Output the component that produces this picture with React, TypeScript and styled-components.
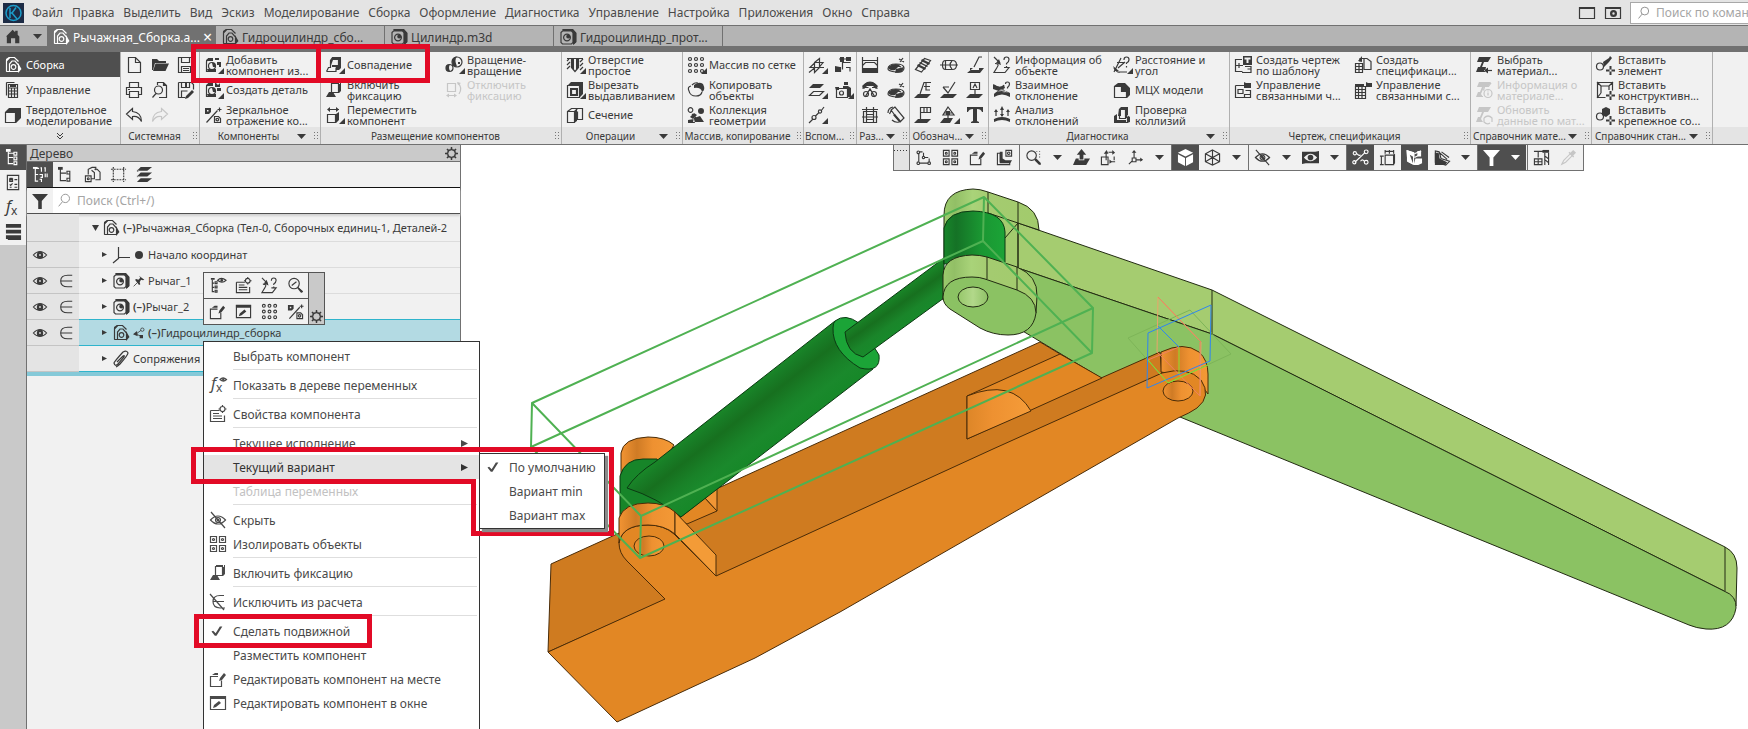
import React from "react";
import styled, { createGlobalStyle, css } from "styled-components";

const ink = "#3a3a3a";
const dark = "#4f4f4f";
const line = "#717171";
const light = "#f1f1f1";
const foot = "#e4e4e4";
const cyan = "#2fb4cc";
const red = "#e20a26";

const GlobalStyle = createGlobalStyle`
  * { box-sizing: border-box; }
  body { margin: 0; background: #fff; color: ${ink}; font: 12px "Noto Sans", "Open Sans", sans-serif; }
  button { border: 0; margin: 0; padding: 0; background: none; color: inherit; font: inherit; text-align: left; white-space: nowrap; }
  input { font: inherit; color: inherit; }
  input::placeholder { color: #a5a5a5; opacity: 1; }
`;

/* ---------- icons, on an 18 x 18 grid ---------- */

const c = (x: number, y: number, r: number) => `M${x - r} ${y}a${r} ${r} 0 1 0 ${2 * r} 0a${r} ${r} 0 1 0 ${-2 * r} 0`;
const q = (x: number, y: number, w: number, h: number) => `M${x} ${y}h${w}v${h}h${-w}z`;
const pencil = "M11 8l4-5 2 2-4 5-3 1z";
const slab = "M4 13h13l-4 4H0z";
const grid9 = [3, 9, 15].flatMap((x) => [3, 9, 15].map((y) => c(x, y, 1.5))).join("");
const four = [1.5, 10.5].flatMap((x) => [1.5, 10.5].map((y) => q(x, y, 6, 6) + c(x + 3, y + 3, 1))).join("");
const eye = "M1.500 9q7.500-8 15 0q-7.500 8-15 0z";

type Glyph = [string, string?];
const glyphs: Record<string, Glyph> = {
  assembly: ["M2.500 15.500V4.500l3-3h5l4 4M5.500 15.500V8l2.500-3h3l3.500 4v6.500zM2.500 15.500h9" + c(9.5, 11, 2.3), "M14 7l3.500 6-3.500 4zM2 3l3-2 1 1-3 3v11l-1-1z"],
  part: ["M2 4.500l1.500-1.500h9l1.500 1.500v10l-1.500 1.500h-9L2 14.500zM3.500 2h10l3 3v9l-2 2" + c(8, 9.5, 3.4), "M3 2l1-1h10l3.500 4v9L14 17V5l-2-3z" + c(9.2, 8.6, 2)],
  home: ["", "M0 9l8-8 3 3V2h3v5l2 2v8h-5v-6H6v6H1V9z"],
  control: ["M4.500 3.500h9v13h-9zM2.500 1.500h8M2.500 1.500v13M4.500 7h9M4.500 10h9M4.500 13h9M7.500 7v9M10.500 7v9", q(6, 4, 6, 2)],
  solid: ["M1.500 6.500h10v10h-10z", "M1 6l4-4h12l-5 4zM12 6l5-4v10l-5 5z"],
  newDoc: ["M3.500 1.500h7l5 5v10h-12zM10.500 1.500v5h5"],
  folder: ["", "M1 3h5l2 2h7v2H4l-2 7H1zM4.500 7.500H18L14.500 15H2z"],
  save: ["M1.500 1.500h13l2 2v13h-15zM4.500 1.500v5h8v-5M4.500 16.500v-6h9v6M6 12.500h6M6 14.500h6"],
  saveAs: ["M1.500 1.500h13l2 2v5M1.500 1.500v15h7M4.500 1.500v5h8v-5M4.500 16v-6h6", "M9 15l6-6 2 2-6 6-3 1zM8 2h2v4H8z"],
  print: ["M4.500 6V1.500h9V6M4.500 13.500h-3v-7h15v7h-3M4.500 10.500h9v6h-9z", q(3, 8, 2, 1)],
  preview: ["M6.500 4V1.500h6l3 3v12H8M12.500 1.500v3h3" + c(7.500, 9, 4) + "M5 12.500L1.500 16.500"],
  undo: ["M7.500 2.500L1.500 8l6 5.500v-3q6-1 9 5q0-9-9-10z"],
  redo: ["M10.500 2.500l6 5.500-6 5.500v-3q-6-1-9 5q0-9 9-10z"],
  addComp: ["M2.500 5.500v10h9M2.500 5.500l2-3h3" + c(8, 10, 3.500), "M2 4l3-2h4v3H3v11H2zM11 2h4v2h-4zM13 6h4v5h-2V9h-2zM8 7h3v4H9zM3 13h9v3H4z"],
  newPart: ["M2.500 5.500v10h9M2.500 5.500l2-3h3" + c(8, 10, 3.500), "M2 4l3-2h4v3H3v11H2zM11 1l3 3 2-2v4h-5zM13 7h4v3h-4zM8 7h3v4H9zM3 13h9v3H4z"],
  mirror: ["M2.500 16.500l11-12M13.500 3.500h4M15.500 1.500v4M10.500 10.500h4l2 2v4h-6z" + c(13.300, 13.600, 1.300), "M1 2h6v4l-2 2H1zM3 4v1.500h1.500V4z"],
  coincide: ["M1.500 15.500h9.500v-4M1.500 15.500l2-4h2M5.500 12V4.500l2-3h6v9h-6", "M7 2l1-1h8v11l-2 2V4H8l-3 8V6zM7 9h7v5h-3v-3H7z"],
  fix: ["M6.500 2.500h7v9h-7zM6.500 6v7", "M1 16l3-5h4l3 5zM14 1h2v9l-2 2zM7 1h8v2H7z"],
  move: ["M2.500 8.500h8v8h-8zM3 3.500h11", "M11 8l3-2v8l-3 3zM2 3.500L5 1v5zM14 3.500L11 1v5z"],
  rotate: [c(4.500, 12, 3.500) + c(12, 6, 5), "M7 4q2-4 5-3.500q-3 3 0 10q-5 1-5-6.500zM1 12q0-4 4-3.500q-2 3 0 6.500q-4 1-4-3zM13 6h2v2h-2z"],
  release: ["M2.500 2.500h8v8h-8zM13 2q5 5 1 11M2 14.500h9", "M1 14.500l3-2v4zM12 14.500l-3-2v4zM12 1l4 1-3 2z"],
  hole: ["M1 2.500h16M5.500 2.500v9l3.500 4 3.500-4v-9M1 5l2-2M1 9l3-3M1 13l3-3M14 6l3-3M14 10l3-3M14 14l3-3", "M6 3h2v11l-2-2zM10 3h2v9l-2 2z"],
  cut: ["M1.500 4.500h12v12h-12zM5.500 8.500h5v5h-5z", "M2 4l3-3h12l-3 3zM14 4l3-3v12l-3 3zM4 7h8v8H4zM6 9v4h4V9z"],
  section: ["M1.500 5.500h7v11h-7zM8.500 5.500l3-3h5v11h-5v-8M1.500 5.500l4-3h6", "M8 6l3-3v12l-3 2z"],
  array: [grid9],
  copy: ["M4 5q-4 1-2 5q1 5 7 5q5 0 6-4M5 4q3-3 6-2", "M7 4q5-4 9-1 3 6-1 8-1-5-8-4z"],
  collect: [c(3.500, 4, 2.300) + "M5 8l5 5", "M11 5a3 3 0 1 0 6 0a3 3 0 1 0-6 0M3 11l4-4 3 2-4 4zM7 12l6-2 4 6H6zM1 14l6-1 1 4H1z"],
  plane: ["M6.500 6.500l5-4v9l-5 5zM7 11.500H2l5-5h8l-4 5H7M1 16.500l6-5h9"],
  offset: ["M1.500 14.500h10l4-4h-10z", "M1 7h11l4-4H5z"],
  lineIco: ["M1 17l4-4M7.500 10l3-3M13 5l3-4" + c(6, 11.500, 2) + c(12, 5.500, 1.600)],
  tree2: ["M8.500 3.500v10M8.500 6.500h8M2.500 11.500h4v4h-4zM12 11.500h4v4M5 3h7", "M6 1h4v5H6zM12 1h5v4h-5zM1 10l5 1v5H1z"],
  camera: ["M2.500 7.500h11v9h-11z" + c(7.500, 12, 2), "M1 6h4v3H2zM9 5h5l3 2v9h-3V7H9zM10 1h4v3h-4z"],
  dim1: ["M1.500 1v15.500h15V1M1.500 4.500h15M4.500 6.500h9l3 3v6h-15v-6z", "M2 12h14v4H2z"],
  dim2: ["M1 13q0-5 8-5t8 4q0 5-8 4t-8-3zM5 12q5-3 9-1M13 6l3-4M12 3l5 3", "M1 11q6-5 12-2l-5 5q-6 1-7-3zM9 13l8-2-2 5-7 1z"],
  dim3: ["M2 8a7 7 0 0 1 14 0M4 16l5-8 5 8M1.500 6.500h6M11 6.500h5" + c(5, 13, 2.500) + c(13, 13, 2.500), "M1 5q8-8 16 0l-2 3-3-3H6L3 8z"],
  dim4: ["M2.500 5.500h13v11h-13zM5.500 8.500h7v5h-7zM5.500 1v15M12.500 1v15M1 3.500h16M1 11h16"],
  dim5: ["M4 4l9 12 4-4-9-11zM1 7q0-5 5-6M4.500 4l-2 4M8 1l-4 3M5 14q3 3 7 2", "M8 8l6 7-2 1-6-7z"],
  thread: ["M1.500 13.500l9-11 6 2-9 11.500z", "M4 8l8 4-1 2-8-4zM6 6l8 4-1 1-8-4zM8 3l8 4-1 2-8-4z"],
  axis: ["M5.500 4.500h7q4 0 4 4.500t-4 4.500h-7q-3 0-3-4.500t3-4.500zM0 9h18M5.500 4.500v9M12 5q-4 4 0 8"],
  rough: ["M16 1h-3L8 11", "M7 12h11l-4 5H1zM4 12h9v2H4z"],
  base: ["M6 13L10 1.500h7M10 5.500h6M12 2v7h4", slab],
  check3: ["M3 6l5 6 7-11M3 6h6", slab],
  letterA: ["M4.500 1.500h9v7h-9zM9 9v4M7 7l2-4 2 4", slab],
  flagI: ["M6.500 13V1.500h10v5h-10M10 2v4M13 2v4", slab],
  mark: ["M8 1l6 8H3zM8 9v4M4 7h9", "M4 12h9l-3 5H0zM6 5h4v4H6z"],
  text: ["", "M1 1h16v5h-1q-1-3-5-3v12l2 1v1H5v-1l2-1V3Q3 3 2 6H1z"],
  info: ["M1 1l6 6M2 7.500q5 0 2 4l-3 5h11l4-5h-5M11 4q0-3 2.500-3t2.500 2.500-2.500 4v1M13.500 10v1.500", "M8 9l-5-2 3-4z"],
  mutual: ["M1 4q7 5 10 0M2 13q6-5 14 0M12.500 3q0-2 2-2t2 2-2 3.500v1", "M0 3q6 5 11 1l1 3q-5 4-12 1zM1 13q7-7 16-1v4q-8-5-16 0zM3 10l12 2-5-4z"],
  analysis: ["M3 5v5M9 2v8M15 5v5M1 14q8-4 16 0", "M1 13q8-4 16 0v3q-8-4-16 0zM7 4l2-4 2 4zM7 8l2 3 2-3zM1 6l2-3 2 3zM13 6l2-3 2 3z"],
  distance: ["M1 16L8 2M4 6.500h7M1 12q3 5 6 4h7M5 12l7-6M11 4q0-3 2.500-3T16 3.500 13.500 7v1M13.500 10v1.500", "M0 10l2 5h4z"],
  mass: ["M1.500 5.500h7v5h5v6h-12z", "M1 5l4-3h7l5 5v7l-3 3v-7H9V5z"],
  collision: ["M2.500 10.500v6h12v-6M6.500 10V3.500h6v9h-6z", "M6 3l2-2h7v11h-3V4H8v6H5zM1 10l3-2v6h9v3H1zM14 9l3 2v5l-3 1z"],
  drawTpl: ["M8 3.500H1.500v12h7M2 9.500h7M5 7v5M11 10.500h6v6h-9M13.500 13h3", "M9 0h9v9H9zM10.500 1.500v2h2V7h2V3.500h2v-2z"],
  drawLink: ["M1.500 4.500h9M1.500 4.500v12h9M4 8.500h5v4H4zM11.500 9.500h5v7h-6v-3h6", "M10 1l2 1h5v5h-7z"],
  spec: ["M6 5.500V2.500h6M10 2.500h3l4 3v8h-7zM1.500 7.500h7v9h-7zM1.500 10.500h7M1.500 13.500h7M5 7v9", "M4 5l4-5v6z"],
  specLink: ["M1.500 5.500h10v12h-10zM1.500 8.500h10M1.500 11.500h10M1.500 14.500h10M4.500 5v12M8 5v12", "M12 1l2 1h4v4h-6zM1 3h9v3H1z"],
  material: ["M10 14.500h7", "M4 1h12l-3 5H9L7 11h4l-1 5H1l2-5h2l2-5H2zM9 14.500l4-3v6z"],
  materialInfo: ["M4.500 2.500h11l-2 3h-4l-1 4M2 15.500h6" + c(13, 12.500, 4) + "M13 11.500v3M13 9.500v1", "M4 1h12l-3 5H9L6 13l2 3H1l2-5h2l2-5H2z"],
  materialUpd: ["M9 12q4-4 8 0v4M9 12v4q3 3 6 1", "M4 1h12l-3 5H9L6 13l2 3H1l2-5h2l2-5H2z"],
  insEl: [c(4, 10.500, 3.500), "M7 6l6-4 1-2 2 2-3 4-5 5zM10 13.500h9v2h-9zM13.500 10h2v9h-2z"],
  insCon: ["M1.500 1.500h15v8M1.500 1.500v15h8M5 12V5h8v4M1 1l4 4M17 1l-4 4M1 17l4-5", "M10 13.500h9v2h-9zM13.500 10h2v9h-2z"],
  insFix: [c(4, 10.500, 3.500), "M6 3l4-2 4 2v5l-4 3-4-2zM10 13.500h9v2h-9zM13.500 10h2v9h-2z"],
  sketch: ["M4 5v8M5 15h9M15 14V10M14 9h-4M9 8V4M8 3H5" + c(3.500, 3.500, 1.400) + c(3.500, 15, 1.400) + c(15, 15, 1.400) + c(9, 9, 1.200)],
  four: [four],
  editPlace: ["M9 6.500H1.500v10h11v-6", pencil + "M3 5l3-2h3v2z"],
  editWindow: [q(1.500, 2.500, 15, 13), "M1 2h16v3H1zM5 11l5-4 2 2-5 4-3 1z"],
  partL: ["M1.500 4.500h3v9h10v3h-13z" + q(10.500, 1.500, 6, 6) + c(13.500, 4.500, 1.300), "M4 3h3v7l3 2h7l-2 3H4z"],
  zoom: [c(7, 7, 5) + "M10.500 10.500l6 6", "M10 12l2-2 5 5-2 2zM12 2h1v1h-1zM15 2h1v1h-1zM15 5h1v1h-1zM15 8h1v1h-1z"],
  zoomFit: [c(7.500, 7, 5.500) + "M11.500 11l5 5M5 9l5-4", "M11 12l1-1 5 4-2 2z"],
  upArrow: ["", "M9 0l5 6h-3v5H7V6H4zM3 10h3v2h6v-2h6l-4 7H0z"],
  orient: ["M1.500 8.500h7v8h-7zM6.500 4v8M9 3.500h5M12 13.500h4M15 8v4", "M4 5l3-4 2 4zM13 1l3 3-3 2zM10 11l3 2.500-3 2z"],
  axes: ["M7.500 9V3M10 11.500h6M5 13L2 16" + q(5.500, 9.500, 4, 4), "M5 4l2.500-3 2.500 3zM14 9l3 2.500-3 2z"],
  cube: ["", "M9 0l8 4-8 4-8-4zM1 5.500l7.500 4V18L1 14zM17 5.500l-7.500 4V18l7.500-4z"],
  wire: ["M9 1l7.500 4v8.500L9 17l-7.500-3.500V5zM1.500 5L9 9l7.500-4M9 9v8M9 1v8M1.500 13.500L9 9l7.500 4.500"],
  hide: [eye + "M2 1l14 16" + c(9, 9, 2.500), c(9, 9, 1.500)],
  eye: [eye + c(9, 9, 3), c(9, 9, 3) + c(9, 9, 1)],
  eyeBox: ["", "M0 3h14l4-1v13H4l-4 1zM2 9q7 8 14 0q-7-8-14 0z" + c(9, 9, 3)],
  points: ["M3 14L14 3.500" + c(2.500, 14, 1.700) + c(15, 3, 2) + c(3, 4.500, 1.700) + c(15, 14, 2) + "M5 5q3 3 4 1M9 13q2-3 4 0"],
  dimBox: ["M6.500 6.500h9v10h-9zM6.500 1v4M15.500 1v4M6 2.500h10M1 7.500h4M1 16.500h4M2.500 7v10M11 1v4", "M15 6l2-1v10l-2 2z"],
  faces: ["M1 2l7 2v12l-6-3zM9 5l7-3M9 9l4-2", "M1 1l8 3v5L4 6l4 11-7-4zM10 10h7v5l-4 2h-5zM12 2h4v6h-4z"],
  layersL: ["M2.500 2v12l11 3 4-4-9-3-2-7zM6 3l9 8M9 3l8 6", "M2 4h4l1 6 8 4-2 3H2z"],
  filter: ["", "M0 1h18l-7 8v9H7V9z"],
  crane: ["M5.500 3v6M1.500 10.500h8v6h-8zM5.500 10v6M1 13.500h8M1 2.500h16M12.500 4v13M16.500 4v13M12 7l4 3M12 11l4 3", "M10 1h7v3h-7z"],
  pen: ["M2 16l2-4 7-7 2 2-7 7z", "M10 3l1 1 3-3 3 3-3 3 1 1-1 1-5-5z"],
  tree: ["M3.500 3v12.500h5M3.500 9h5" + q(9.500, 3.500, 3, 3) + q(9.500, 8.500, 3, 3) + q(9.500, 13.500, 3, 3) + "M3 4.500h6", "M1 0h5v3H1z"],
  treeNum: ["M3.500 2v14h3M3.500 2.500h4M3.500 9h3M9 2h1v4M13 2h1v4M8 9h3v3H9M14 8v4M16 8v4M8 14h2v3", "M1 1h5v2H1z"],
  treeSmall: ["M2.500 2v13.500h6M2.500 7.500h6" + q(9.500, 5.500, 3, 3) + q(9.500, 13, 3, 3) + "M12.500 7.500v6", "M0 1h5v3H0z"],
  treeEye: ["M3.500 3v12.500h2M3.500 6.500h2M3.500 11h2" + q(6.500, 5, 2, 2) + q(6.500, 9.500, 2, 2) + q(6.500, 14, 2, 2) + "M9 3.500q4-4 9 0q-4 4-9 0z", "M2 1h4v2H2z" + c(13.500, 3.500, 1.500)],
  list: ["M2.500 1.500h12v15h-12zM5 5h3v3H5zM10 6h3M5 11l1 1 2-2M10 11h3M5 14h2M10 14h3", q(5, 4, 3, 3)],
  bars: ["", q(1, 0, 16, 4) + q(1, 6, 16, 4) + q(1, 12, 16, 4) + "M3 16h14v1H3z"],
  docs: ["M1.500 10.500h6v6h-6zM4.500 9V3.500l4-2h4v3M8 13.500h3V7l-3-2.500M11 3.500h3l3 3v8h-5" + c(4.500, 13.500, 1)],
  selection: ["M3.500 1v16M14.500 1v16M1 3.500h16M1 14.500h16"],
  layers: ["", "M5 1h12l-5 4H1zM5 7h12l-5 4H1zM5 13h12l-5 4H1zM1 4l3 1-3 1zM1 10l3 1-3 1z"],
  origin: ["M6.500 1v11M6 11.500h12M7 12l-6 5"],
  pin: ["M1 17l6-6", "M9 1l8 6-2 1-3-1-2 4 1 3-2 1-6-8 2-1 3 1 3-3z"],
  share: ["M4 11l8-6M5 11l8 3" + c(14, 4, 2.500), "M0 11l6-5 1 8zM10 12h5v5h-5z"],
  clip: ["M5 12l6-6q2-1 1 1l-6 7q-3 3-4-1 0-1 9-11 4-2 5 1 0 2-8 11-2 2-4 3"],
  props: ["M1.500 5.500h9M1.500 5.500v11h14v-6M4 8.500h6M4 11h9M4 13.500h9" + c(13.500, 4, 2.500) + "M13.500 0v2M13.500 6v2M9.500 4h2M15.500 4h2"],
  gear: [c(9, 9, 5) + c(9, 9, 6), "M8 0h2v4H8zM8 14h2v4H8zM0 8h4v2H0zM14 8h4v2h-4zM2 3.500L3.500 2l3 3L5 6.500zM14.500 2L16 3.500l-3 3L11.500 5zM2 14.500L3.500 16l3-3L5 11.500zM14.500 16l1.500-1.500-3-3-1.500 1.500z"],
  exclude: ["M15 2.500h-4q-7 0-7 6t7 6.500h5M4 8.500h11M1 1l14 16"],
  member: ["M16 2.500h-5q-8 0-8 6.500t8 6.500h5M3 9h13"],
  fxEye: ["M11 3.500q3-3 6.500 0q-3 3-6.500 0z", c(14.300, 3.500, 1.200)],
  check: ["", "M3 9l2-1 3 3 5-8h3L9 14H7z"],
  search: [c(10, 6.500, 5) + "M6.500 10.500L2 16"],
  winPlain: [q(1.500, 3.500, 15, 11), q(1, 3, 16, 2)],
  winGear: [q(1.500, 3.500, 15, 11), "M1 3h16v2H1zM6 9.500a3.500 3.500 0 1 0 7 0a3.500 3.500 0 1 0-7 0" + c(9.500, 9.500, 1.200)],
};

const Svg = styled.svg<{ $dash?: boolean }>`
  flex: none;
  display: block;
  overflow: visible;
  ${(p) => p.$dash && "stroke-dasharray: 2 1;"}
`;

const Fx = () => (
  <text x="2" y="13" fontSize="16" fontStyle="italic" fontFamily="Noto Sans, Open Sans, sans-serif" fill="currentColor">f<tspan fontSize="12" fontStyle="normal" dy="3">x</tspan></text>
);

const Icon = ({ name, size = 18, more }: { name: string; size?: number; more?: boolean }) => {
  const [s, f] = glyphs[name];
  return (
    <Svg viewBox="0 0 18 18" width={size} height={size} aria-hidden="true" $dash={name === "selection"}>
      {f && <path d={f} fill="currentColor" fillRule="evenodd" />}
      {s && <path d={s} fill="none" stroke="currentColor" strokeWidth="1.2" />}
      {name === "fxEye" && <Fx />}
      {more && <path d="M20 12v6h-6z" fill="currentColor" />}
    </Svg>
  );
};

const Down = () => (
  <Svg width="9" height="5" viewBox="0 0 9 5" aria-hidden="true"><path d="M0 0h9L4.500 5z" fill="currentColor" /></Svg>
);
const Right = ({ size = 6 }: { size?: number }) => (
  <Svg width={size} height={size} viewBox="0 0 6 6" aria-hidden="true"><path d="M0 0l6 3-6 3z" fill="currentColor" /></Svg>
);

/* ---------- frame ---------- */

const Shell = styled.div`
  position: relative;
  display: flex;
  flex-direction: column;
  height: 100vh;
  overflow: hidden;
`;

const MenuBar = styled.nav`
  flex: none;
  display: flex;
  align-items: center;
  height: 26px;
  padding-left: 3px;
  gap: 9px;
  background: ${foot};
  border-bottom: 1px solid ${line};
  overflow: hidden;
  color: #4a4a4a;
`;
const Logo = styled.svg`
  flex: none;
  margin-right: -1px;
`;
const MenuTools = styled.div`
  flex: none;
  display: flex;
  align-items: center;
  gap: 8px;
  width: 170px;
  margin-left: auto;
  color: ${ink};
`;
const CommandSearch = styled.label`
  flex: none;
  display: flex;
  align-items: center;
  gap: 5px;
  width: 200px;
  height: 22px;
  padding-left: 6px;
  background: #fff;
  border: 1px solid #a8a8a8;
  color: #8c8c8c;
`;
const PlainInput = styled.input`
  flex: 1;
  min-width: 0;
  padding: 0;
  border: 0;
  outline: 0;
  background: none;
`;

const TabBar = styled.div`
  flex: none;
  display: flex;
  height: 26px;
  background: #b4b4b4;
  border-bottom: 6px solid ${line};
`;
const HomeTab = styled.button`
  display: flex;
  align-items: center;
  gap: 12px;
  width: 47px;
  padding-left: 6px;
`;
const Tab = styled.button<{ $active?: boolean }>`
  display: flex;
  align-items: center;
  gap: 3px;
  width: 169px;
  padding: 2px 6px 0 5px;
  border-right: 1px solid ${line};
  ${(p) => p.$active && css`background: ${line}; color: #fff;`}
`;
const Close = styled.span`
  margin-left: auto;
  font-size: 16px;
  line-height: 16px;
`;

/* ---------- ribbon ---------- */

const Ribbon = styled.div`
  flex: none;
  display: flex;
  height: 93px;
  background: linear-gradient(${light} 75px, ${foot} 75px);
  border-bottom: 1px solid ${line};
  overflow: hidden;
`;
const Group = styled.section<{ $w: number }>`
  flex: none;
  display: flex;
  flex-direction: column;
  width: ${(p) => p.$w}px;
  border-right: 1px solid #b0b0b0;
`;
const Columns = styled.div`
  display: flex;
  height: 75px;
`;
const LabelColumn = styled.div`
  flex: 1;
  min-width: 0;
`;
const IconColumn = styled.div`
  flex: none;
  width: 26px;
`;
const Command = styled.button<{ $active?: boolean }>`
  display: flex;
  align-items: center;
  width: 100%;
  height: 25px;
  padding: 0 0 0 4px;
  gap: 4px;
  font-size: 11px;
  line-height: 11px;
  white-space: pre;
  ${(p) => p.$active && css`background: ${dark}; color: #fff;`}
  &:disabled { color: #c6c6c6; }
`;
const GroupFoot = styled.footer`
  display: flex;
  align-items: center;
  height: 17px;
  padding: 1px 1px 0 0;
  font-size: 10px;
`;
const GroupTitle = styled.h2`
  flex: 1;
  min-width: 0;
  margin: 0;
  font: inherit;
  text-align: center;
  white-space: nowrap;
`;
const FootArrow = styled.span`
  width: 12px;
`;
const Grip = styled.span`
  width: 5px;
  height: 9px;
  margin: 0 1px 2px 4px;
  background: radial-gradient(circle, #777 1px, transparent 1px) 0 0 / 3px 3px;
`;

type Cmd = { icon: string; label: string; more?: boolean; off?: boolean; on?: boolean };
const k = (icon: string, label: string, more = false, off = false): Cmd => ({ icon, label, more, off });

const Commands = ({ items }: { items: Cmd[] }) => (
  <LabelColumn>
    {items.map((i) => (
      <Command key={i.label} disabled={i.off} $active={i.on}>
        <Icon name={i.icon} more={i.more} />
        {i.label}
      </Command>
    ))}
  </LabelColumn>
);
const Icons = ({ items }: { items: string[] }) => (
  <IconColumn>
    {items.map((i) => (
      <Command key={i} aria-label={i.replace("+", "")} disabled={i === "redo"}>
        <Icon name={i.replace("+", "")} more={i.endsWith("+")} />
      </Command>
    ))}
  </IconColumn>
);

const groups: { title: string; w: number; arrow?: boolean; labels?: Cmd[][]; icons?: string[][] }[] = [
  { title: "Системная", w: 79, icons: [["newDoc", "print", "undo"], ["folder", "preview", "redo"], ["save", "saveAs"]] },
  { title: "Компоненты", w: 121, arrow: true, labels: [[k("addComp", "Добавить\nкомпонент из...", true), k("newPart", "Создать деталь", true), k("mirror", "Зеркальное\nотражение ко...")]] },
  {
    title: "Размещение компонентов", w: 241, labels: [
      [k("coincide", "Совпадение", true), k("fix", "Включить\nфиксацию"), k("move", "Переместить\nкомпонент", true)],
      [k("rotate", "Вращение-\nвращение", true), k("release", "Отключить\nфиксацию", false, true)],
    ],
  },
  { title: "Операции", w: 121, arrow: true, labels: [[k("hole", "Отверстие\nпростое", true), k("cut", "Вырезать\nвыдавливанием", true), k("section", "Сечение")]] },
  { title: "Массив, копирование", w: 121, labels: [[k("array", "Массив по сетке", true), k("copy", "Копировать\nобъекты"), k("collect", "Коллекция\nгеометрии")]] },
  { title: "Вспом...", w: 53, icons: [["plane+", "offset+", "lineIco+"], ["tree2", "camera+"]] },
  { title: "Раз...", w: 53, arrow: true, icons: [["dim1", "dim3", "dim4"], ["dim2", "radius", "dim5"]] },
  { title: "Обознач...", w: 79, arrow: true, icons: [["thread", "base", "flagI"], ["axis", "check3", "mark+"], ["rough", "letterA", "text"]] },
  {
    title: "Диагностика", w: 241, arrow: true, labels: [
      [k("info", "Информация об\nобъекте"), k("mutual", "Взаимное\nотклонение"), k("analysis", "Анализ\nотклонений")],
      [k("distance", "Расстояние и\nугол", true), k("mass", "МЦХ модели"), k("collision", "Проверка\nколлизий")],
    ],
  },
  {
    title: "Чертеж, спецификация", w: 241, labels: [
      [k("drawTpl", "Создать чертеж\nпо шаблону"), k("drawLink", "Управление\nсвязанными ч...")],
      [k("spec", "Создать\nспецификаци..."), k("specLink", "Управление\nсвязанными с...")],
    ],
  },
  { title: "Справочник мате...", w: 121, arrow: true, labels: [[k("material", "Выбрать\nматериал..."), k("materialInfo", "Информация о\nматериале...", false, true), k("materialUpd", "Обновить\nданные по мат...", false, true)]] },
  { title: "Справочник стан...", w: 121, arrow: true, labels: [[k("insEl", "Вставить\nэлемент"), k("insCon", "Вставить\nконструктивн..."), k("insFix", "Вставить\nкрепежное со...")]] },
];
glyphs.radius = glyphs.dim2;

/* ---------- work area ---------- */

const Work = styled.div`
  flex: 1;
  min-height: 0;
  display: flex;
`;
const Rail = styled.div`
  flex: none;
  width: 27px;
  background: #c9c9c9;
  border-right: 1px solid ${line};
`;
const RailButton = styled.button<{ $active?: boolean }>`
  display: flex;
  align-items: center;
  justify-content: center;
  width: 100%;
  height: 25px;
  background: ${(p) => (p.$active ? dark : light)};
  color: ${(p) => (p.$active ? "#fff" : ink)};
`;
const Panel = styled.aside`
  flex: none;
  display: flex;
  flex-direction: column;
  width: 434px;
  background: ${light};
  border-right: 1px solid ${line};
`;
const PanelHead = styled.header`
  display: flex;
  align-items: center;
  justify-content: space-between;
  height: 17px;
  padding: 0 2px 0 3px;
  background: #cacaca;
  border-bottom: 1px solid ${line};
`;
const PanelTools = styled.div`
  display: flex;
  height: 26px;
  border-bottom: 1px solid #111;
`;
const ToolButton = styled.button<{ $active?: boolean }>`
  display: flex;
  align-items: center;
  justify-content: center;
  width: 26px;
  height: 25px;
  ${(p) => p.$active && css`background: ${dark}; color: #fff;`}
`;
const FilterRow = styled.div`
  display: flex;
  align-items: center;
  height: 26px;
  border-bottom: 1px solid ${dark};
  box-shadow: 0 2px 2px #d0d0d0;
`;
const TreeSearch = styled.label`
  flex: 1;
  display: flex;
  align-items: center;
  gap: 5px;
  height: 100%;
  padding-left: 4px;
  background: #fff;
  color: #999;
`;
const Tree = styled.ul`
  margin: 0;
  padding: 0;
  list-style: none;
  font-size: 11px;
`;
const TreeRow = styled.li<{ $first?: boolean }>`
  display: grid;
  grid-template-columns: 52px 1fr;
  height: ${(p) => (p.$first ? 28 : 26)}px;
`;
const Marks = styled.div`
  display: flex;
  align-items: center;
  background: ${foot};
  border-bottom: 1px solid #c4c4c4;
`;
const MarkCell = styled.button`
  display: flex;
  align-items: center;
  justify-content: center;
  width: 26px;
`;
const NodeCell = styled.div<{ $depth: number; $sel?: boolean; $edge?: boolean }>`
  display: flex;
  align-items: center;
  gap: 3px;
  min-width: 0;
  overflow: hidden;
  padding-left: ${(p) => 13 + p.$depth * 10}px;
  border-bottom: 1px solid ${(p) => (p.$edge ? cyan : "#dcdcdc")};
  background: ${(p) => (p.$sel ? "#b3dae3" : "none")};
  white-space: nowrap;
`;
const Expander = styled.span`
  flex: none;
  width: 7px;
`;
const Dot = styled.span`
  width: 8px;
  height: 8px;
  margin: 0 2px;
  border-radius: 50%;
  background: ${ink};
`;
const Loose = styled.span`
  margin-right: -3px;
  font-weight: 600;
`;
const TreeEnd = styled.div`
  height: 4px;
  background: #85c9d8;
`;
const Viewport = styled.main`
  position: relative;
  flex: 1;
  min-width: 0;
  overflow: hidden;
  background: #fff;
`;
const ViewTools = styled.div`
  position: absolute;
  top: 0;
  right: 164px;
  display: flex;
  height: 26px;
  background: ${light};
  border: solid ${line};
  border-width: 0 1px 1px;
`;
const ViewHandle = styled.span`
  width: 15px;
  background: radial-gradient(circle, ${ink} 1px, transparent 1px) 2px 4px / 3px 3px no-repeat, ${foot};
  background-repeat: repeat-x, repeat;
`;
const ViewGroup = styled.div`
  display: flex;
  padding-right: 1px;
  border-left: 1px solid ${line};
`;
const ViewButton = styled.button<{ $arrow?: boolean; $on?: boolean }>`
  display: flex;
  align-items: center;
  justify-content: center;
  width: ${(p) => (p.$arrow ? 21 : 27)}px;
  height: 25px;
  ${(p) => p.$on && css`background: ${dark}; color: #fff;`}
  &:disabled { color: #c6c6c6; }
`;

const viewGroups = [
  ["sketch", "four", "editPlace", "partL"],
  ["zoom", "v", "upArrow", "orient", "axes", "v"],
  ["cube*", "wire", "v"],
  ["hide", "v", "eyeBox", "v"],
  ["points*", "dimBox", "faces*", "layersL", "v"],
  ["filter*", "v*"],
  ["crane", "pen"],
];

/* ---------- pop-ups ---------- */

const MiniBar = styled.div`
  position: absolute;
  left: 203px;
  top: 272px;
  display: flex;
  border: 1px solid #555;
  background: #c9c9c9;
`;
const MiniGrid = styled.div`
  display: grid;
  grid-template-columns: repeat(4, 26px);
  background: ${light};
  border-right: 1px solid #555;
`;
const MiniButton = styled(ToolButton)<{ $top?: boolean }>`
  height: ${(p) => (p.$top ? 26 : 25)}px;
  ${(p) => p.$top && "border-bottom: 1px solid #555;"}
`;
const MiniSettings = styled.button`
  align-self: flex-end;
  padding: 0 1px 1px;
`;
const Menu = styled.ul`
  position: absolute;
  left: 203px;
  top: 341px;
  width: 277px;
  margin: 0;
  padding: 2px 0 20px;
  list-style: none;
  background: #fff;
  border: 1px solid #333;
  color: #4a4a4a;
`;
const MenuRow = styled.button<{ $hot?: boolean }>`
  display: grid;
  grid-template-columns: 29px 1fr 18px;
  align-items: center;
  width: 100%;
  height: 24px;
  ${(p) => p.$hot && css`background: ${foot}; color: #333;`}
  &:disabled { color: #c2c2c2; }
`;
const IconSlot = styled.span`
  padding-left: 5px;
`;
const Separator = styled.hr`
  height: 1px;
  margin: 1px 2px 3px 29px;
  border: 0;
  background: #dedede;
`;
const SubMenu = styled(Menu)`
  left: 479px;
  top: 453px;
  width: 126px;
  padding: 1px 0;
  box-shadow: 3px 3px 1px #8a8a8a;
`;
const Marking = styled.svg`
  position: absolute;
  left: 0;
  top: 0;
  pointer-events: none;
`;

const menuItems: { label: string; icon?: string; sep?: boolean; sub?: boolean; off?: boolean; hot?: boolean }[] = [
  { label: "Выбрать компонент", sep: true },
  { label: "Показать в дереве переменных", icon: "fxEye", sep: true },
  { label: "Свойства компонента", icon: "props", sep: true },
  { label: "Текущее исполнение", sub: true },
  { label: "Текущий вариант", sub: true, hot: true },
  { label: "Таблица переменных", off: true, sep: true },
  { label: "Скрыть", icon: "hide" },
  { label: "Изолировать объекты", icon: "four", sep: true },
  { label: "Включить фиксацию", icon: "fix", sep: true },
  { label: "Исключить из расчета", icon: "exclude", sep: true },
  { label: "Сделать подвижной", icon: "check" },
  { label: "Разместить компонент" },
  { label: "Редактировать компонент на месте", icon: "editPlace" },
  { label: "Редактировать компонент в окне", icon: "editWindow" },
];

const MenuEntry = ({ label, icon, sub, off, hot }: { label: string; icon?: string; sub?: boolean; off?: boolean; hot?: boolean }) => (
  <MenuRow disabled={off} $hot={hot}>
    <IconSlot>{icon && <Icon name={icon} size={icon === "check" ? 15 : 18} />}</IconSlot>
    {label}
    {sub && <Right size={7} />}
  </MenuRow>
);

/* ---------- 3D model ---------- */

const Model = () => (
  <svg viewBox="461 145 1287 584" width="1287" height="584" display="block" role="img" aria-label="Модель рычажной сборки">
    <defs>
      <linearGradient id="cyl" gradientUnits="userSpaceOnUse" x1="745" y1="391" x2="781" y2="437">
        <stop offset="0" stopColor="#198728" /><stop offset=".12" stopColor="#187d26" /><stop offset=".32" stopColor="#17701f" /><stop offset=".6" stopColor="#198128" /><stop offset=".8" stopColor="#1a892c" /><stop offset="1" stopColor="#178829" />
      </linearGradient>
      <linearGradient id="rod" gradientUnits="userSpaceOnUse" x1="900" y1="290" x2="919" y2="317">
        <stop offset="0" stopColor="#198728" /><stop offset=".35" stopColor="#17701f" /><stop offset=".7" stopColor="#1a852a" /><stop offset="1" stopColor="#188a2b" />
      </linearGradient>
      <linearGradient id="eyeG"><stop offset="0" stopColor="#18862b" /><stop offset=".2" stopColor="#157226" /><stop offset=".6" stopColor="#1a9632" /><stop offset="1" stopColor="#1ba437" /></linearGradient>
      <linearGradient id="eyeL"><stop offset="0" stopColor="#9ccb6c" /><stop offset=".12" stopColor="#92bf66" /><stop offset=".3" stopColor="#a9d379" /><stop offset=".5" stopColor="#a4cb70" /><stop offset="1" stopColor="#a2cb6c" /></linearGradient>
      <linearGradient id="eyeO"><stop offset="0" stopColor="#f29433" /><stop offset=".3" stopColor="#cf7b25" /><stop offset=".6" stopColor="#ee9131" /><stop offset="1" stopColor="#f39936" /></linearGradient>
      <linearGradient id="halfO"><stop offset="0" stopColor="#dd8628" /><stop offset=".4" stopColor="#ee9131" /><stop offset="1" stopColor="#f59c39" /></linearGradient>
      <linearGradient id="holeL"><stop offset="0" stopColor="#96c76a" /><stop offset=".5" stopColor="#b2d88a" /><stop offset="1" stopColor="#8fc166" /></linearGradient>
    </defs>
    <g stroke="#222b12" strokeWidth="1" strokeLinejoin="round">
      <path fill="#a5cc70" d="M988 213L1018 223L1212 290L1725 547Q1737 553 1737 568L1736 606L1724 591L1212 334L1018 268L1004 262V214z" />
      <path fill="#8bc263" d="M1018 268L1212 334L1724 591Q1737 596 1736 608Q1732 631 1706 629Q1696 628 1689 625L1180 417L1101 378L1021 330z" />
      <path fill="none" d="M1212 290V334M1725 547V591" />
      <path fill="url(#eyeL)" d="M944 262V215Q944 190 973 189Q980 189 988 192L1018 202Q1039 209 1039 230L1018 223V268L944 262z" />
      <path fill="none" d="M988 192V214M1018 202V268M988 213L1018 223L1005 238" />
    </g>
    <g stroke="#4a2c08" strokeWidth="1" strokeLinejoin="round">
      <path fill="#cf7b20" d="M551 564L1040 342L1060 354L1101 378L1160 352L1162 374L716 577L548 652z" />
      <path fill="#e28724" d="M1060 354L1102 378L967 439V396z" />
      <path fill="url(#halfO)" d="M967 439V396Q1012 378 1031 411z" />
      <path fill="url(#eyeO)" d="M1161 372V352Q1184 341 1199 352Q1208 360 1208 374V394L1196 378z" />
      <path fill="#e28724" d="M548 652L665 599L627 561Q619 553 619 543Q622 525 648 525Q664 525 674 534L716 576L993 449L1162 373Q1188 366 1201 380Q1212 396 1197 408Q1190 413 1178 418L840 612L755 658L617 722z" />
      <ellipse fill="url(#eyeO)" cx="1178" cy="391" rx="15" ry="10" />
      <path fill="#e28724" d="M678 519L705 498L717 511L687 524z" />
      <path fill="#f19635" d="M705 498L717 511V486z" />
      <path fill="url(#eyeO)" d="M621 480V453Q623 438 648 437Q665 437 674 445L660 470z" />
    </g>
    <g stroke="#0b3a12" strokeWidth="1" strokeLinejoin="round">
      <path fill="#178529" d="M620 520V476Q625 459 643 459H657L690 500L681 517L660 512z" />
      <path fill="url(#cyl)" d="M835 321L655 462Q636 474 627 488Q658 498 681 517L873 369z" />
      <path fill="#1ba437" d="M835 321Q845 313 859 323L879 355Q881 373 860 368Q832 351 833 328Q833 323 835 321z" />
      <path fill="url(#rod)" d="M845 332L944 258V298L863 357Q846 353 845 332z" />
      <path fill="url(#eyeG)" d="M944 264V228Q948 211 973 211Q1004 212 1005 232V262z" />
    </g>
    <g stroke="#4a2c08" strokeWidth="1" strokeLinejoin="round">
      <path fill="url(#eyeO)" d="M619 543V518Q624 503 648 503Q665 503 675 512V534Q664 525 648 525Q622 525 619 543z" />
      <path fill="#f39b37" d="M675 512L716 555V576L675 534z" />
      <ellipse fill="url(#eyeO)" cx="649" cy="546" rx="15" ry="10" />
    </g>
    <g stroke="#222b12" strokeWidth="1" strokeLinejoin="round">
      <path fill="url(#eyeL)" d="M943 300V275Q944 256 972 255Q980 255 987 257L1017 267Q1038 276 1037 296L1036 313z" />
      <path fill="#8bc263" d="M943 297Q944 277 972 277Q980 277 985 279L1017 290Q1036 297 1036 313Q1033 335 1008 335Q993 335 980 328L950 309Q943 304 943 297z" />
      <path fill="none" d="M987 257V279M1017 267V290" />
      <ellipse fill="url(#holeL)" cx="973" cy="297" rx="15" ry="10" />
    </g>
    <g fill="none" stroke="#4fb152" strokeWidth="2" strokeLinejoin="round">
      <path d="M532 403L984 197L1093 308L641 516z" />
      <path d="M531 447L983 241L1092 353L640 558z" />
      <path d="M532 403L531 447M984 197L983 241M1093 308L1092 353M641 516L640 558" />
    </g>
    <g fill="none">
      <path stroke="#7db558" d="M1128 338L1190 310L1231 354L1168 383z" />
      <path stroke="#e9a56b" d="M1200 396L1201 342L1158 297L1157 352" />
      <path stroke="#f08060" d="M1158 297L1201 342M1157 352L1200 396V342M1148 360L1179 347" />
      <path stroke="#2f86f0" d="M1148 333L1211 305L1210 361L1147 388zM1158 326L1179 347" />
      <path stroke="#86e030" d="M1148 360L1168 383L1208 365M1179 347V374" />
    </g>
  </svg>
);

/* ---------- page ---------- */

const menus = ["Файл", "Правка", "Выделить", "Вид", "Эскиз", "Моделирование", "Сборка", "Оформление", "Диагностика", "Управление", "Настройка", "Приложения", "Окно", "Справка"];

const nodes = [
  { marks: [], icons: ["assembly"], label: "Рычажная_Сборка (Тел-0, Сборочных единиц-1, Деталей-2", loose: true, root: true },
  { marks: ["eye"], icons: ["origin"], label: "Начало координат", dot: true },
  { marks: ["eye", "member"], icons: ["part"], label: "Рычаг_1", extra: "pin" },
  { marks: ["eye", "member"], icons: ["part"], label: "Рычаг_2", loose: true, edge: true },
  { marks: ["eye", "member"], icons: ["assembly"], label: "Гидроцилиндр_сборка", loose: true, extra: "share", sel: true, edge: true },
  { marks: [], icons: ["clip"], label: "Сопряжения", edge: true },
];

export default function App() {
  return (
    <Shell>
      <GlobalStyle />
      <MenuBar>
        <Logo width="21" height="20" viewBox="0 0 21 20" aria-label="КОМПАС">
          <rect width="21" height="20" fill="#1d2b45" />
          <g fill="none" stroke="#1c9cc9" strokeWidth="1.500"><circle cx="10.500" cy="10" r="7.500" /><path d="M7 5v10M13 4.500L9 10l5 6M7 10h3" /></g>
        </Logo>
        {menus.map((m) => <button key={m}>{m}</button>)}
        <MenuTools>
          <button aria-label="Окно"><Icon name="winPlain" /></button>
          <button aria-label="Настройка окна"><Icon name="winGear" /></button>
          <CommandSearch><Icon name="search" size={14} /><PlainInput placeholder="Поиск по командам" /></CommandSearch>
        </MenuTools>
      </MenuBar>
      <TabBar>
        <HomeTab aria-label="Главная"><Icon name="home" size={15} /><Down /></HomeTab>
        <Tab $active><Icon name="assembly" />Рычажная_Сборка.a...<Close>×</Close></Tab>
        <Tab><Icon name="assembly" />Гидроцилиндр_сбо...</Tab>
        <Tab><Icon name="part" />Цилиндр.m3d</Tab>
        <Tab><Icon name="part" />Гидроцилиндр_прот...</Tab>
      </TabBar>
      <Ribbon>
        <Group $w={121}>
          <Columns>
            <Commands items={[{ icon: "assembly", label: "Сборка", on: true }, k("control", "Управление"), k("solid", "Твердотельное\nмоделирование")]} />
          </Columns>
          <GroupFoot>
            <GroupTitle>
              <svg width="8" height="7" viewBox="0 0 8 7" aria-label="Ещё"><path d="M1 0l3 3 3-3M1 3l3 3 3-3" fill="none" stroke={ink} /></svg>
            </GroupTitle>
          </GroupFoot>
        </Group>
        {groups.map((g) => (
          <Group key={g.title} $w={g.w}>
            <Columns>
              {g.labels?.map((items, i) => <Commands key={i} items={items} />)}
              {g.icons?.map((items, i) => <Icons key={i} items={items} />)}
            </Columns>
            <GroupFoot>
              <GroupTitle>{g.title}</GroupTitle>
              {g.arrow && <FootArrow><Down /></FootArrow>}
              <Grip />
            </GroupFoot>
          </Group>
        ))}
      </Ribbon>
      <Work>
        <Rail>
          <RailButton $active aria-label="Дерево"><Icon name="tree" size={17} /></RailButton>
          <RailButton aria-label="Параметры"><Icon name="list" size={17} /></RailButton>
          <RailButton aria-label="Переменные">
            <Svg width="18" height="18" viewBox="0 0 18 18" aria-hidden="true"><Fx /></Svg>
          </RailButton>
          <RailButton aria-label="Список"><Icon name="bars" size={17} /></RailButton>
        </Rail>
        <Panel>
          <PanelHead>Дерево<button aria-label="Настройка панели"><Icon name="gear" size={13} /></button></PanelHead>
          <PanelTools>
            {["treeNum", "treeSmall", "docs", "selection", "layers"].map((n, i) => (
              <ToolButton key={n} aria-label={n} $active={i === 0}><Icon name={n} size={17} /></ToolButton>
            ))}
          </PanelTools>
          <FilterRow>
            <ToolButton aria-label="Фильтр"><Icon name="filter" size={16} /></ToolButton>
            <TreeSearch><Icon name="search" size={15} /><PlainInput placeholder="Поиск (Ctrl+/)" /></TreeSearch>
          </FilterRow>
          <Tree>
            {nodes.map((n) => (
              <TreeRow key={n.label} $first={n.root}>
                <Marks>{n.marks.map((m) => <MarkCell key={m} aria-label={m}><Icon name={m} size={16} /></MarkCell>)}</Marks>
                <NodeCell $depth={n.root ? 0 : 1} $sel={n.sel} $edge={n.edge}>
                  <Expander>{n.root ? <Svg width="7" height="6" viewBox="0 0 7 6"><path d="M0 0h7L3.500 6z" fill={ink} /></Svg> : <Right size={5} />}</Expander>
                  {n.icons.map((i) => <Icon key={i} name={i} />)}
                  {n.extra && <Icon name={n.extra} size={12} />}
                  {n.dot && <Dot />}
                  {n.loose && <Loose>(–)</Loose>}
                  <span>{n.label}</span>
                </NodeCell>
              </TreeRow>
            ))}
          </Tree>
          <TreeEnd />
        </Panel>
        <Viewport>
          <Model />
          <ViewTools>
            <ViewHandle />
            {viewGroups.map((g) => (
              <ViewGroup key={g[0]}>
                {g.map((n, i) => {
                  const name = n.replace("*", "");
                  return (
                    <ViewButton key={i} $arrow={name === "v"} $on={n.endsWith("*")} disabled={name === "pen"} aria-label={name}>
                      {name === "v" ? <Down /> : <Icon name={name} size={17} />}
                    </ViewButton>
                  );
                })}
              </ViewGroup>
            ))}
          </ViewTools>
        </Viewport>
      </Work>
      <MiniBar>
        <MiniGrid>
          {["treeEye", "props", "info", "zoomFit", "editPlace", "editWindow", "array", "mirror"].map((n, i) => (
            <MiniButton key={n} aria-label={n} $top={i < 4}><Icon name={n} size={17} /></MiniButton>
          ))}
        </MiniGrid>
        <MiniSettings aria-label="Настройка"><Icon name="gear" size={13} /></MiniSettings>
      </MiniBar>
      <Menu>
        {menuItems.map((m) => (
          <li key={m.label}>
            <MenuEntry {...m} />
            {m.sep && <Separator />}
          </li>
        ))}
      </Menu>
      <Marking width="620" height="660" viewBox="0 0 620 660" aria-hidden="true">
        <g fill="none" stroke={red} strokeWidth="5">
          <path d="M193.500 46.500h125v34h-125zM318.500 46.500h109v34h-109zM196.500 616.500h173v29h-173zM193.500 449.500h418v84h-138v-52h-280z" />
        </g>
      </Marking>
      <SubMenu>
        <li><MenuEntry label="По умолчанию" icon="check" /></li>
        <li><MenuEntry label="Вариант min" /></li>
        <li><MenuEntry label="Вариант max" /></li>
      </SubMenu>
    </Shell>
  );
}
